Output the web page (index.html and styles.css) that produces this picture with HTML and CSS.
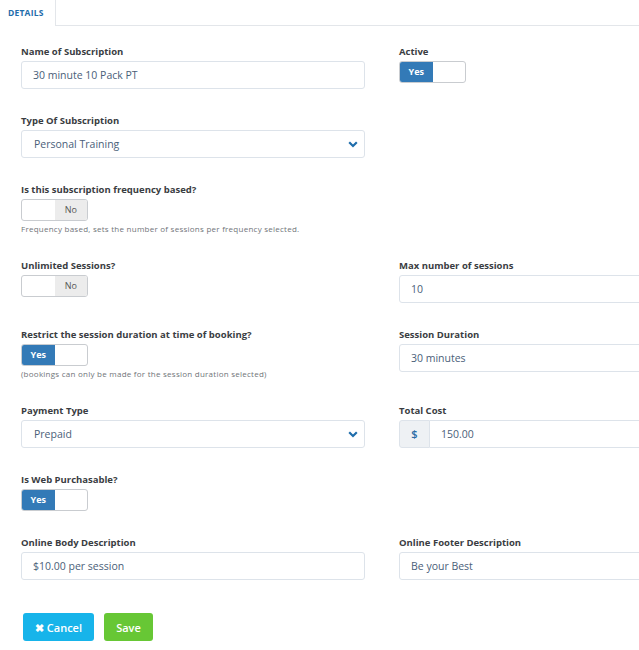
FILE: index.html
```html
<html>

<head>
  <title>Edit Subscription</title>
  <link rel="stylesheet" href="styles.css">
</head>

<body>
  <div class="tabs">
    <div class="tab active">DETAILS</div>
  </div>

  <form class="sub-form">
    <div class="field">
      <label>Name of Subscription</label>
      <input class="input" type="text" value="30 minute 10 Pack PT">
    </div>
    <div class="field">
      <label>Active</label>
      <div class="toggle on"><span class="yes">Yes</span><span class="no"></span></div>
    </div>

    <div class="field">
      <label>Type Of Subscription</label>
      <div class="select">
        <span>Personal Training</span>
        <svg width="10" height="7" viewBox="0 0 10 7"><path d="M1.2 1.3 L5 5 L8.8 1.3" fill="none" stroke="#1f6dab" stroke-width="2.2"/></svg>
      </div>
    </div>
    <div class="field"></div>

    <div class="field">
      <label>Is this subscription frequency based?</label>
      <div class="toggle off"><span class="yes"></span><span class="no">No</span></div>
      <p class="help">Frequency based, sets the number of sessions per frequency selected.</p>
    </div>
    <div class="field"></div>

    <div class="field">
      <label>Unlimited Sessions?</label>
      <div class="toggle off"><span class="yes"></span><span class="no">No</span></div>
    </div>
    <div class="field">
      <label>Max number of sessions</label>
      <input class="input" type="text" value="10">
    </div>

    <div class="field">
      <label>Restrict the session duration at time of booking?</label>
      <div class="toggle on"><span class="yes">Yes</span><span class="no"></span></div>
      <p class="help">(bookings can only be made for the session duration selected)</p>
    </div>
    <div class="field">
      <label>Session Duration</label>
      <input class="input" type="text" value="30 minutes">
    </div>

    <div class="field">
      <label>Payment Type</label>
      <div class="select">
        <span>Prepaid</span>
        <svg width="10" height="7" viewBox="0 0 10 7"><path d="M1.2 1.3 L5 5 L8.8 1.3" fill="none" stroke="#1f6dab" stroke-width="2.2"/></svg>
      </div>
    </div>
    <div class="field">
      <label>Total Cost</label>
      <div class="input-group">
        <span class="addon">$</span>
        <input class="input" type="text" value="150.00">
      </div>
    </div>

    <div class="field">
      <label>Is Web Purchasable?</label>
      <div class="toggle on"><span class="yes">Yes</span><span class="no"></span></div>
    </div>
    <div class="field"></div>

    <div class="field">
      <label>Online Body Description</label>
      <input class="input" type="text" value="$10.00 per session">
    </div>
    <div class="field">
      <label>Online Footer Description</label>
      <input class="input" type="text" value="Be your Best">
    </div>

    <div class="actions">
      <button type="button" class="btn btn-cancel">&#10006; Cancel</button>
      <button type="button" class="btn btn-save">Save</button>
    </div>
  </form>
</body>

</html>
```

FILE: styles.css
```css
html {
  overflow: hidden;
}

body {
  margin: 0;
  font-family: 'Open Sans', sans-serif;
  color: #3b3f45;
  background: #fff;
}

.tabs {
  display: flex;
  height: 25px;
  border-bottom: 1px solid #e3e6ea;
}

.tab {
  width: 47px;
  padding-left: 8px;
  font-size: 8.5px;
  font-weight: 700;
  letter-spacing: 0.2px;
  line-height: 25px;
  color: #1f6dab;
  border-right: 1px solid #e3e6ea;
}

.tab.active {
  background: #fff;
  height: 26px;
}

.sub-form {
  display: grid;
  grid-template-columns: 344px 344px;
  column-gap: 34px;
  row-gap: 26px;
  align-items: start;
  padding: 20px 0 0 21px;
  width: 800px;
}

label {
  display: block;
  font-size: 9.5px;
  font-weight: 700;
  line-height: 12px;
  margin-bottom: 3px;
  color: #3a3d42;
}

.input {
  display: block;
  box-sizing: border-box;
  width: 100%;
  height: 28px;
  padding: 0 11px;
  border: 1px solid #dde3ea;
  border-radius: 3px;
  font-family: inherit;
  font-size: 10.5px;
  color: #4a6079;
  outline: none;
}

.select {
  display: flex;
  align-items: center;
  justify-content: space-between;
  box-sizing: border-box;
  height: 28px;
  padding: 0 6px 0 12px;
  border: 1px solid #dde3ea;
  border-radius: 3px;
  font-size: 10.5px;
  color: #4a6079;
}

.input-group {
  display: flex;
}

.input-group .input {
  border-radius: 0 3px 3px 0;
  border-left: 0;
}

.addon {
  flex: 0 0 31px;
  box-sizing: border-box;
  height: 28px;
  line-height: 26px;
  text-align: center;
  background: #eef1f4;
  border: 1px solid #dde3ea;
  border-radius: 3px 0 0 3px;
  color: #2a6ca6;
  font-size: 11px;
  font-weight: 600;
}

.toggle {
  display: flex;
  box-sizing: border-box;
  width: 67px;
  height: 22px;
  border: 1px solid #c9ccd0;
  border-radius: 3px;
  overflow: hidden;
}

.toggle span {
  flex: 1;
  font-size: 9px;
  line-height: 20px;
  text-align: center;
}

.toggle.on .yes {
  background: #337ab7;
  color: #fff;
  font-weight: 700;
}

.toggle.off .no {
  background: #ececec;
  color: #555;
}

.help {
  margin: 3px 0 0;
  font-size: 8px;
  letter-spacing: 0.25px;
  line-height: 10px;
  color: #707479;
}

.actions {
  grid-column: 1 / span 2;
  display: flex;
  gap: 10px;
  margin: 7px 0 0 2px;
}

.btn {
  height: 28px;
  border: 0;
  border-radius: 3px;
  padding: 0;
  font-family: inherit;
  font-size: 11px;
  font-weight: 600;
  color: #fff;
  cursor: pointer;
}

.btn-cancel {
  width: 71px;
  background: #17b4ea;
}

.btn-save {
  width: 49px;
  background: #67c735;
}
```
